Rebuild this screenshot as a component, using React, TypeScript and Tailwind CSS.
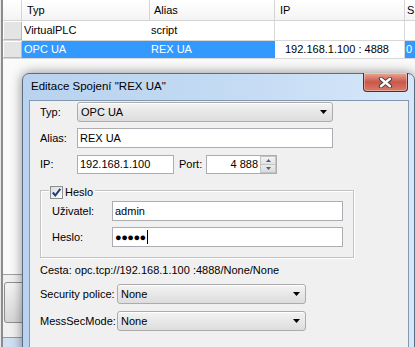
import React from "react";

function Arrow() {
  return (
    <svg width="7" height="4" viewBox="0 0 7 4">
      <path d="M0 0h7L3.5 4z" fill="#000" />
    </svg>
  );
}

function Combo({ value, w }: { value: string; w: string }) {
  return (
    <div
      className={`${w} h-[20px] flex items-center justify-between rounded-[3px] border border-[#acacac] bg-gradient-to-b from-[#f3f3f3] to-[#dddddd] pl-[3px] pr-[5px] shadow-[inset_0_1px_0_#ffffff]`}
    >
      <span>{value}</span>
      <Arrow />
    </div>
  );
}

function Input({ w, h = "h-[20px]", children }: { w: string; h?: string; children?: React.ReactNode }) {
  return (
    <div className={`${w} ${h} flex items-center border border-[#abadb3] bg-white pl-[2px]`}>{children}</div>
  );
}

export default function App() {
  return (
    <div className="relative w-[415px] h-[347px] overflow-hidden bg-[#f0f0f0] text-[11px] text-black font-['Liberation_Sans',Arial,sans-serif]">
      {/* background table window */}
      <div className="flex h-full">
        <div className="w-[1px] bg-[#e8e8e8]" />
        <div className="w-[2px] bg-[#8c8c8c]" />
        <div className="flex flex-col flex-1">
          <div className="flex flex-col h-[275px] bg-white border-b border-[#a0a0a0]">
            {/* header */}
            <div className="flex h-[21px] border-b border-[#d5d5d5] bg-gradient-to-b from-white to-[#f4f4f4]">
              <div className="w-[19px] border-r border-[#d5d5d5]" />
              <div className="w-[128px] border-r border-[#d5d5d5] pl-[5px] flex items-center">Typ</div>
              <div className="w-[125px] border-r border-[#d5d5d5] pl-[4px] flex items-center">Alias</div>
              <div className="w-[130px] border-r border-[#d5d5d5] pl-[5px] flex items-center">IP</div>
              <div className="flex-1 pl-[2px] flex items-center">S</div>
            </div>
            {/* row 1 */}
            <div className="flex h-[20px] border-b border-[#d8d8d8]">
              <div className="w-[19px] border border-[#b8b8b8] border-t-white border-l-white bg-[#e4e4e4]" />
              <div className="w-[128px] pl-[2px] flex items-center">VirtualPLC</div>
              <div className="w-[125px] border-r border-[#d8d8d8] pl-[1px] flex items-center">script</div>
              <div className="w-[130px] border-r border-[#d8d8d8]" />
              <div className="flex-1" />
            </div>
            {/* row 2 selected */}
            <div className="flex h-[18px] border-b border-[#d8d8d8]">
              <div className="w-[19px] border border-[#b8b8b8] border-t-white border-l-white bg-[#e4e4e4]" />
              <div className="w-[128px] pl-[2px] flex items-center bg-[#3399ff] text-white">OPC UA</div>
              <div className="w-[125px] pl-[1px] flex items-center bg-[#3399ff] text-white">REX UA</div>
              <div className="w-[130px] pl-[10px] flex items-center bg-white border-r border-[#d8d8d8]">192.168.1.100 : 4888</div>
              <div className="flex-1 pl-[1px] flex items-center bg-[#3399ff] text-white">0</div>
            </div>
            <div className="flex-1 bg-[#fafafa]" />
          </div>
          <div className="mt-[7px] ml-[1px] h-[41px] w-[30px] rounded-[3px] border border-[#8f8f8f] bg-gradient-to-b from-[#f4f4f4] to-[#d6d6d6]" />
          <div className="mt-[14px] h-[1px] bg-[#9a9a9a]" />
          <div className="flex-1 bg-[#cfe0f2]" />
        </div>
      </div>

      {/* dialog window */}
      <div className="absolute left-[22px] top-[73px] w-[393px] h-[290px] rounded-t-[7px] border border-[#5e6e82] bg-gradient-to-r from-[#b9d2ee] via-[#c3daf3] to-[#d6e7f9] shadow-[0_0_12px_rgba(0,0,0,0.45)] flex flex-col">
        <div className="h-[26px] flex items-center pl-[8px] text-[11.5px] font-['Liberation_Sans',Arial,sans-serif]">
          Editace Spojení "REX UA"
        </div>
        <div className="absolute left-[340px] top-[-1px] w-[45px] h-[19px] rounded-b-[4px] border border-[#5a2a26] border-t-0 bg-gradient-to-b from-[#e9a897] via-[#c9574a] to-[#d87b69] flex items-center justify-center shadow-[inset_0_0_0_1px_rgba(255,255,255,0.35)]">
          <svg width="15" height="11" viewBox="0 0 15 11">
            <path d="M3 1.8 L12 9.2 M12 1.8 L3 9.2" stroke="#3b3b3b" strokeWidth="4.2" strokeLinecap="round" />
            <path d="M3 1.8 L12 9.2 M12 1.8 L3 9.2" stroke="#ffffff" strokeWidth="2.4" strokeLinecap="round" />
          </svg>
        </div>
        <div className="ml-[6px] w-[380px] flex-1 border border-[#8497b0] bg-[#f0f0f0] flex flex-col pl-[10px] pt-[1px]">
          {/* Typ */}
          <div className="flex items-center h-[20px]">
            <div className="w-[37px]">Typ:</div>
            <Combo value="OPC UA" w="w-[256px]" />
          </div>
          {/* Alias */}
          <div className="flex items-center h-[20px] mt-[6px]">
            <div className="w-[37px]">Alias:</div>
            <Input w="w-[256px]">REX UA</Input>
          </div>
          {/* IP */}
          <div className="flex items-center h-[19px] mt-[7px]">
            <div className="w-[37px]">IP:</div>
            <Input w="w-[97px]" h="h-[19px]">192.168.1.100</Input>
            <div className="ml-[5px] w-[27px]">Port:</div>
            <div className="w-[71px] h-[19px] flex border border-[#abadb3] bg-white">
              <div className="flex-1 flex items-center justify-end pr-[2px]">4 888</div>
              <div className="w-[16px] flex flex-col">
                <div className="flex-1 flex items-center justify-center border border-[#c4c4c4] bg-gradient-to-b from-[#f4f4f4] to-[#e2e2e2]">
                  <svg width="5" height="3" viewBox="0 0 5 3"><path d="M0 3h5L2.5 0z" fill="#4c5f80" /></svg>
                </div>
                <div className="flex-1 flex items-center justify-center border border-t-0 border-[#c4c4c4] bg-gradient-to-b from-[#ececec] to-[#dadada]">
                  <svg width="5" height="3" viewBox="0 0 5 3"><path d="M0 0h5L2.5 3z" fill="#4c5f80" /></svg>
                </div>
              </div>
            </div>
          </div>
          {/* Heslo group */}
          <div className="relative mt-[16px] w-[314px] h-[68px] border border-[#c2c2c2] shadow-[inset_1px_1px_0_#ffffff,1px_1px_0_#ffffff] flex flex-col pl-[11px] pt-[10px]">
            <div className="absolute left-[8px] top-[-7px] flex items-center gap-[2px] bg-[#f0f0f0] px-[1px]">
              <div className="w-[13px] h-[13px] border border-[#8e8f8f] bg-gradient-to-br from-[#dcdcdc] to-white flex items-center justify-center">
                <svg width="11" height="11" viewBox="0 0 11 11">
                  <path d="M1.8 5.5 L4.3 8.5 L9.3 1.8" stroke="#1d3f7c" strokeWidth="2" fill="none" />
                </svg>
              </div>
              <span className="pr-[1px]">Heslo</span>
            </div>
            <div className="flex items-center h-[20px]">
              <div className="w-[60px]">Uživatel:</div>
              <Input w="w-[231px]">admin</Input>
            </div>
            <div className="flex items-center h-[20px] mt-[6px]">
              <div className="w-[60px]">Heslo:</div>
              <Input w="w-[231px]">
                <span className="text-[11px] tracking-[-0.5px] leading-none">●●●●●</span>
                <span className="ml-[1px] w-[1px] h-[14px] bg-black" />
              </Input>
            </div>
          </div>
          {/* Cesta */}
          <div className="mt-[5px] h-[14px] flex items-center">Cesta: opc.tcp://192.168.1.100 :4888/None/None</div>
          {/* Security police */}
          <div className="flex items-center h-[20px] mt-[7px]">
            <div className="w-[77px]">Security police:</div>
            <Combo value="None" w="w-[189px]" />
          </div>
          <div className="flex items-center h-[20px] mt-[7px]">
            <div className="w-[77px]">MessSecMode:</div>
            <Combo value="None" w="w-[189px]" />
          </div>
        </div>
      </div>
    </div>
  );
}
